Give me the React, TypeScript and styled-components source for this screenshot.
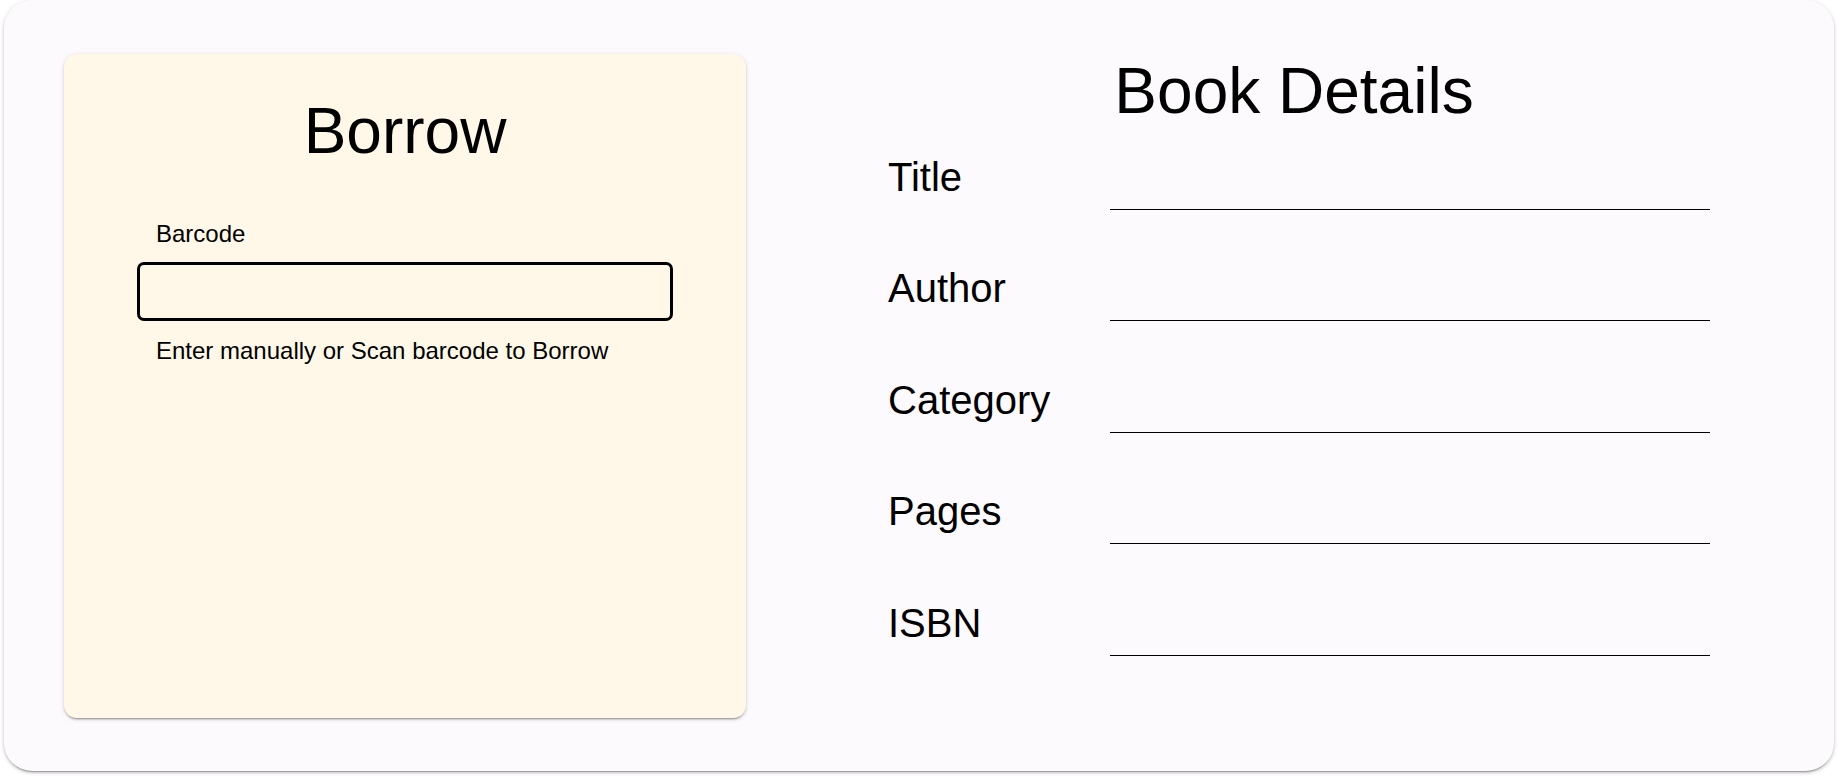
import React, { useState } from 'react';
import styled, { createGlobalStyle } from 'styled-components';

const fields = ['Title', 'Author', 'Category', 'Pages', 'ISBN'];

const GlobalStyle = createGlobalStyle`
  html, body {
    margin: 0;
    padding: 0;
    background: #ffffff;
  }
  body {
    font-family: 'Liberation Sans', Arial, Helvetica, sans-serif;
    color: #000;
  }
  * {
    box-sizing: border-box;
  }
`;

const Page = styled.div`
  padding: 0 4px 8px 4px;
`;

const Shell = styled.div`
  display: flex;
  align-items: flex-start;
  height: 771px;
  padding: 54px 0 0 60px;
  background: #fdfafd;
  border-radius: 28px;
  box-shadow: 0px 3px 1px -2px rgba(0, 0, 0, 0.22), 0px 2px 3px 0px rgba(0, 0, 0, 0.16),
    0px 1px 5px 0px rgba(0, 0, 0, 0.12);
`;

const BorrowCard = styled.div`
  width: 682px;
  height: 664px;
  padding-top: 41px;
  display: flex;
  flex-direction: column;
  align-items: center;
  background: #fff8e8;
  border-radius: 13px;
  box-shadow: 0px 3px 1px -2px rgba(0, 0, 0, 0.2), 0px 2px 2px 0px rgba(0, 0, 0, 0.14),
    0px 1px 5px 0px rgba(0, 0, 0, 0.12);
`;

const Heading = styled.h1`
  margin: 0;
  font-size: 64px;
  font-weight: 400;
  line-height: 1.15;
`;

const FieldGroup = styled.div`
  width: 536px;
  margin-top: 51px;
  display: flex;
  flex-direction: column;
`;

const SmallText = styled.label`
  display: block;
  margin: 0;
  padding-left: 19px;
  font-size: 24px;
  line-height: 1.15;
`;

const BarcodeInput = styled.input`
  width: 100%;
  height: 59px;
  margin: 15px 0 16px;
  padding: 0 16px;
  border: 3px solid #000;
  border-radius: 7px;
  background: transparent;
  font-family: inherit;
  font-size: 24px;
  outline: none;
`;

const Details = styled.div`
  width: 822px;
  margin-left: 142px;
  padding-top: 1px;
  display: flex;
  flex-direction: column;
`;

const DetailsHeading = styled(Heading)`
  text-align: center;
  padding-right: 10px;
  margin-bottom: 25px;
`;

const Rows = styled.div`
  display: flex;
  flex-direction: column;
  gap: 55.5px;
`;

const Row = styled.div`
  display: grid;
  grid-template-columns: 222px 600px;
  align-items: end;
`;

const RowLabel = styled.label`
  font-size: 40px;
  line-height: 46px;
  margin-bottom: 10px;
`;

const LineInput = styled.input`
  height: 40px;
  width: 100%;
  border: none;
  border-bottom: 1px solid #000;
  background: transparent;
  font-family: inherit;
  font-size: 24px;
  outline: none;
`;

const App = () => {
  const [barcode, setBarcode] = useState('');

  return (
    <Page>
      <GlobalStyle />
      <Shell>
        <BorrowCard>
          <Heading>Borrow</Heading>
          <FieldGroup>
            <SmallText htmlFor="barcode">Barcode</SmallText>
            <BarcodeInput
              id="barcode"
              value={barcode}
              onChange={(e) => setBarcode(e.target.value)}
            />
            <SmallText as="p">Enter manually or Scan barcode to Borrow</SmallText>
          </FieldGroup>
        </BorrowCard>

        <Details>
          <DetailsHeading>Book Details</DetailsHeading>
          <Rows>
            {fields.map((f) => (
              <Row key={f}>
                <RowLabel>{f}</RowLabel>
                <LineInput readOnly />
              </Row>
            ))}
          </Rows>
        </Details>
      </Shell>
    </Page>
  );
};

export default App;
